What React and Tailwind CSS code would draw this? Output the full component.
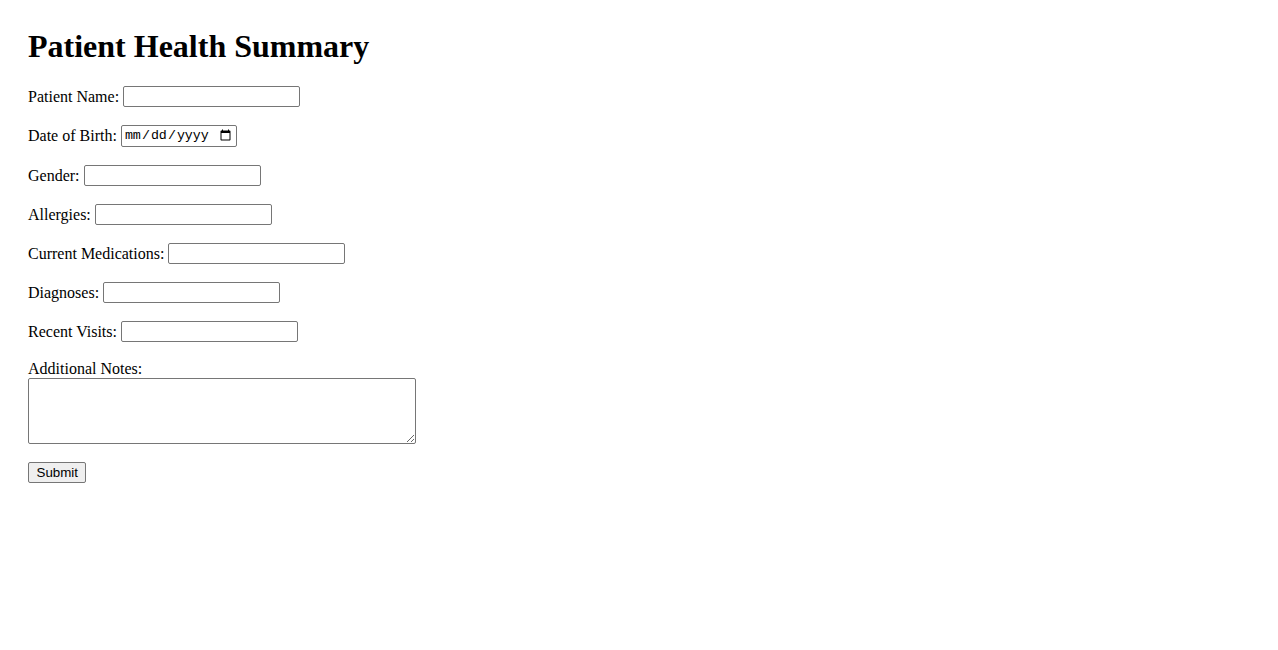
import React from "react";

const serif = { fontFamily: '"Liberation Serif", "Times New Roman", serif' };

function Field({ label, type = "text" }) {
  const isDate = type === "date";
  return (
    <div
      className={
        isDate
          ? "flex items-center h-[24px] mb-4 text-[16px] text-black"
          : "flex items-center h-[23px] mb-4 text-[16px] text-black"
      }
    >
      <label className="leading-[18px] mr-[4px]">{label}</label>
      {isDate ? (
        <input
          type="date"
          className="w-[116px] h-[22px] border border-[#767676] rounded-[2px] px-[2px] text-[13.33px] bg-white text-black"
          style={{ fontFamily: '"Liberation Mono", "Courier New", monospace' }}
        />
      ) : (
        <input
          type="text"
          className="w-[177px] h-[21px] border border-[#767676] rounded-[2px] px-[2px] text-[13.33px] bg-white"
          style={{ fontFamily: '"Liberation Sans", Arial, sans-serif' }}
        />
      )}
    </div>
  );
}

export default function App() {
  return (
    <div className="min-h-[650px] bg-white pt-[28px] pl-[28px] text-black" style={serif}>
      <h1 className="text-[32px] font-bold leading-[37px] mb-[20px]">Patient Health Summary</h1>
      <form onSubmit={(e) => e.preventDefault()}>
        <Field label="Patient Name:" />
        <Field label="Date of Birth:" type="date" />
        <Field label="Gender:" />
        <Field label="Allergies:" />
        <Field label="Current Medications:" />
        <Field label="Diagnoses:" />
        <Field label="Recent Visits:" />
        <div className="mb-[18px] text-[16px]">
          <label className="block leading-[19px]">Additional Notes:</label>
          <textarea
            className="block w-[388px] h-[66px] border border-[#767676] rounded-[2px] p-[2px] text-[13.33px] resize-y"
            style={{ fontFamily: '"Liberation Mono", monospace' }}
          />
        </div>
        <button
          type="submit"
          className="block h-[21px] px-[7.5px] border border-[#767676] rounded-[2px] bg-[#efefef] text-[13.33px] leading-[15px] text-black"
          style={{ fontFamily: '"Liberation Sans", Arial, sans-serif' }}
        >
          Submit
        </button>
      </form>
    </div>
  );
}
